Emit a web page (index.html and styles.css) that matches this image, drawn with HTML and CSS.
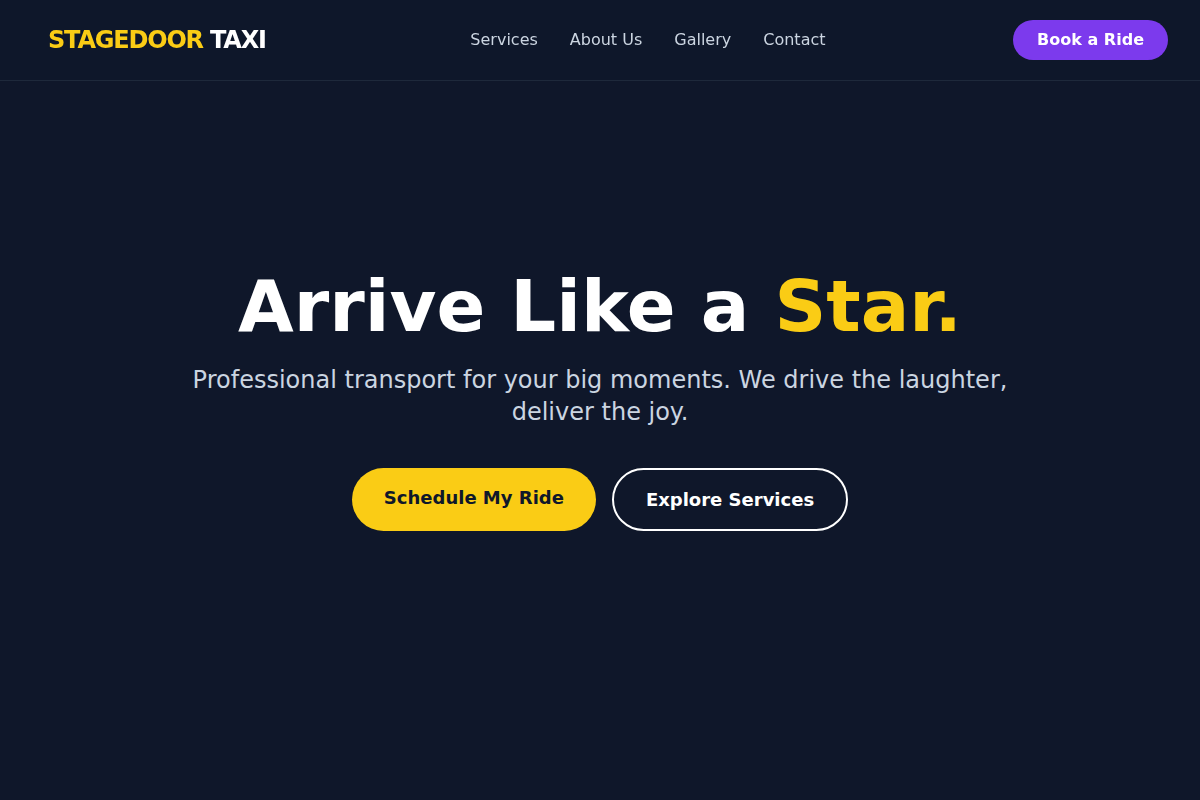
FILE: index.html
```html
<!DOCTYPE html>
<html lang="en">
<head>
<meta charset="utf-8">
<title>Stagedoor Taxi</title>
<link rel="stylesheet" href="styles.css">
</head>
<body>
<header class="site-header">
  <div class="logo"><span class="logo-accent">STAGEDOOR</span> TAXI</div>
  <nav class="main-nav">
    <a href="#">Services</a>
    <a href="#">About Us</a>
    <a href="#">Gallery</a>
    <a href="#">Contact</a>
  </nav>
  <a class="btn-book" href="#">Book a Ride</a>
</header>
<main class="hero">
  <h1 class="hero-title">Arrive Like a <span class="accent">Star.</span></h1>
  <p class="hero-sub">Professional transport for your big moments. We drive the laughter, deliver the joy.</p>
  <div class="hero-actions">
    <a class="btn btn-primary" href="#">Schedule My Ride</a>
    <a class="btn btn-outline" href="#">Explore Services</a>
  </div>
</main>
</body>
</html>
```
FILE: styles.css
```css
* { box-sizing: border-box; }
html, body { margin: 0; padding: 0; }
body {
  background: #0f172a;
  color: #fff;
  font-family: "DejaVu Sans", sans-serif;
}
a { text-decoration: none; color: inherit; }

.site-header {
  position: fixed;
  top: 0; left: 0; right: 0;
  height: 81px;
  display: flex;
  align-items: center;
  justify-content: space-between;
  padding: 0 32px 0 48px;
  background: rgba(15, 23, 42, 0.95);
  border-bottom: 1px solid #1e293b;
  z-index: 10;
}
.logo {
  font-size: 24px;
  font-weight: 700;
  color: #fff;
  letter-spacing: -1.2px;
  margin-right: 17px;
}
.logo-accent { color: #facc15; }
.main-nav {
  display: flex;
  gap: 32px;
  font-size: 16px;
  line-height: 20px;
  color: #cbd5e1;
  margin-top: -1px;
}
.btn-book {
  background: #7c3aed;
  color: #fff;
  font-weight: 700;
  font-size: 16px;
  padding: 10px 24px;
  border-radius: 999px;
  line-height: 20px;
}

.hero {
  min-height: 100vh;
  display: flex;
  flex-direction: column;
  align-items: center;
  justify-content: center;
  text-align: center;
  padding: 0 24px 2px;
}
.hero-title {
  margin: 0;
  font-size: 72px;
  font-weight: 700;
  line-height: 1.1;
}
.accent { color: #facc15; }
.hero-sub {
  margin: 18px 0 40px;
  font-size: 24px;
  line-height: 32px;
  color: #cbd5e1;
  max-width: 860px;
}
.hero-actions {
  display: flex;
  gap: 16px;
}
.btn {
  display: inline-block;
  font-size: 18px;
  font-weight: 700;
  line-height: 23px;
  padding: 20px 32px;
  border-radius: 999px;
}
.btn-primary {
  background: #facc15;
  color: #0f172a;
  padding-top: 18px;
  padding-bottom: 22px;
}
.btn-outline {
  border: 2px solid #fff;
  color: #fff;
  padding: 18px 32px;
}
```
